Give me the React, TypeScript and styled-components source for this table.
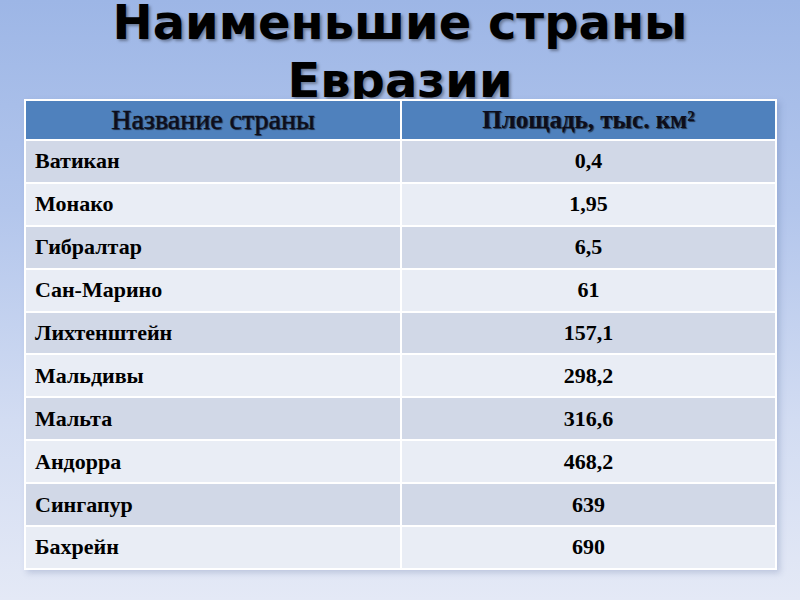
import { FC } from "react";
import styled, { createGlobalStyle } from "styled-components";

interface ICountry {
	name: string;
	area: string;
}

const countries: ICountry[] = [
	{ name: "Ватикан", area: "0,4" },
	{ name: "Монако", area: "1,95" },
	{ name: "Гибралтар", area: "6,5" },
	{ name: "Сан-Марино", area: "61" },
	{ name: "Лихтенштейн", area: "157,1" },
	{ name: "Мальдивы", area: "298,2" },
	{ name: "Мальта", area: "316,6" },
	{ name: "Андорра", area: "468,2" },
	{ name: "Сингапур", area: "639" },
	{ name: "Бахрейн", area: "690" },
];

const GlobalStyle = createGlobalStyle`
	html, body {
		margin: 0;
		padding: 0;
	}

	body {
		width: 800px;
		height: 600px;
		overflow: hidden;
		background: linear-gradient(180deg, #9db6e6 0%, #b3c6ec 35%, #d2dcf2 70%, #e4e9f6 100%);
	}
`;

const App: FC = () => {
	return (
		<>
			<GlobalStyle />
			<Slide>
				<Title>
					Наименьшие страны
					<br />
					Евразии
				</Title>

				<Table>
					<colgroup>
						<col style={{ width: 376 }} />
						<col />
					</colgroup>
					<thead>
						<tr>
							<HeadCell $size={28}>Название страны</HeadCell>
							<HeadCell $size={25} $bold>
								Площадь, тыс. км²
							</HeadCell>
						</tr>
					</thead>
					<tbody>
						{countries.map((c, i) => (
							<Row key={c.name} $odd={i % 2 === 0}>
								<NameCell>{c.name}</NameCell>
								<AreaCell>{c.area}</AreaCell>
							</Row>
						))}
					</tbody>
				</Table>
			</Slide>
		</>
	);
};

export default App;

const Slide = styled.div`
	width: 800px;
	height: 600px;
	display: flex;
	flex-direction: column;
	align-items: center;
	overflow: hidden;
`;

const Title = styled.h1`
	margin: -7px 0 -10px;
	font-family: "DejaVu Sans", Verdana, sans-serif;
	font-size: 48px;
	font-weight: 700;
	line-height: 58px;
	text-align: center;
	color: #000;
	text-shadow: 2px 2px 3px rgba(0, 0, 0, 0.35);
	position: relative;
	z-index: 0;
`;

const Table = styled.table`
	position: relative;
	z-index: 1;
	width: 753px;
	margin-left: 1px;
	table-layout: fixed;
	border-collapse: collapse;
	border: 2px solid #ffffff;
	box-shadow: 3px 3px 6px rgba(80, 100, 150, 0.25);
	font-family: "Liberation Serif", "Times New Roman", serif;
	color: #000;

	td,
	th {
		border: 2px solid #ffffff;
		padding: 0;
	}
`;

const HeadCell = styled.th<{ $bold?: boolean; $size: number }>`
	height: 38px;
	background: #4f81bd;
	font-size: ${({ $size }) => $size}px;
	font-weight: ${({ $bold }) => ($bold ? 700 : 400)};
	text-align: center;
	color: #0d0d1a;
	text-shadow: 1px 1px 1px rgba(0, 0, 0, 0.6);
	-webkit-text-stroke: ${({ $bold }) => ($bold ? "0" : "0.4px #0d0d1a")};
`;

const Row = styled.tr<{ $odd: boolean }>`
	height: 42.9px;
	background: ${({ $odd }) => ($odd ? "#d1d8e7" : "#e9edf5")};
`;

const NameCell = styled.td`
	font-size: 22px;
	font-weight: 700;
	padding-left: 9px !important;
	text-align: left;
`;

const AreaCell = styled.td`
	font-size: 22px;
	font-weight: 700;
	text-align: center;
`;
